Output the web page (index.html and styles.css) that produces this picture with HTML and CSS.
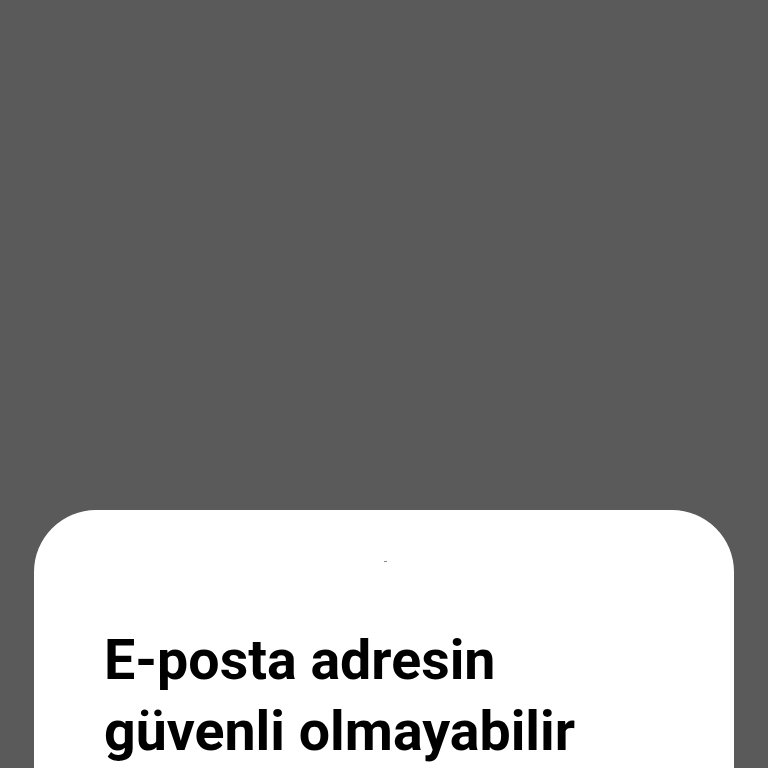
FILE: index.html
```html
<!DOCTYPE html>
<html lang="tr">
<head>
<meta charset="utf-8">
<link rel="stylesheet" href="styles.css">
</head>
<body>
<div class="sheet">
  <div class="handle"></div>
  <h1 class="title">E-posta adresin<br>güvenli olmayabilir</h1>
</div>
</body>
</html>
```
FILE: styles.css
```css
html, body {
  margin: 0;
  padding: 0;
  height: 768px;
  overflow: hidden;
  background: #5a5a5a;
}
.sheet {
  margin: 510px 0 0 34px;
  width: 700px;
  height: 258px;
  background: #ffffff;
  border-radius: 62px 62px 0 0;
  box-sizing: border-box;
  padding: 51px 0 0 70px;
}
.handle {
  width: 3px;
  height: 1px;
  margin-left: 280px;
  background: #8a8a8a;
}
.title {
  margin: 63px 0 0 0;
  font-family: Roboto, "Liberation Sans", sans-serif;
  font-weight: 700;
  font-size: 55.5px;
  line-height: 71px;
  color: #000000;
}
```
